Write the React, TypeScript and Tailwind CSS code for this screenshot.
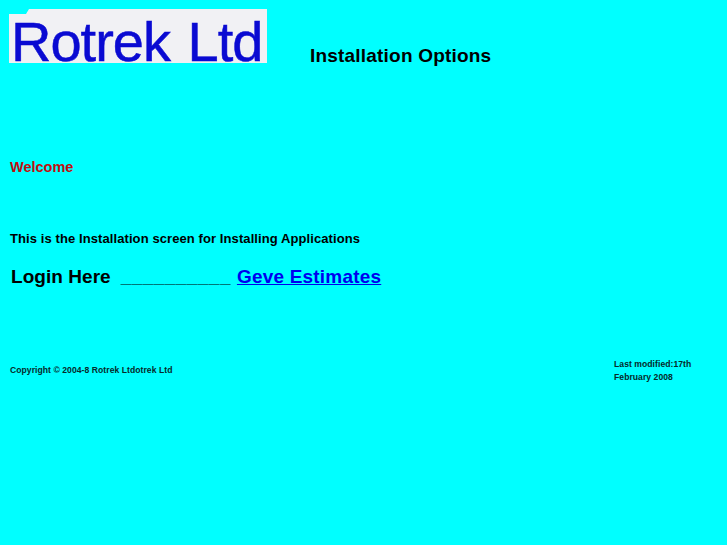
export default function App() {
  return (
    <div className="min-h-[545px] bg-[#00ffff] font-['Liberation_Sans',Arial,sans-serif] font-bold text-black">
      {/* Header */}
      <div className="flex items-start pt-[9px] pl-[9px]">
        <div className="w-[258px] h-[54px] whitespace-nowrap bg-[#f1f1f4] pl-[2px] pt-[12px] text-[56px] leading-[42px] tracking-[-1px] [word-spacing:3px] font-normal text-[#0a0ad2] [clip-path:polygon(0_5px,17px_5px,20px_0,100%_0,100%_100%,0_100%)] [-webkit-text-stroke:0.5px_#0a0ad2]">
          Rotrek Ltd
        </div>
        <h1 className="ml-[43px] mt-[35px] text-[19px] leading-[24px] tracking-[0.2px]">Installation Options</h1>
      </div>

      <p className="mt-[88px] pl-[10px] text-[14.5px] leading-[22px] text-[#c00d0d]">Welcome</p>

      <p className="mt-[51px] pl-[10px] text-[13px] leading-[20px] tracking-[0.09px]">
        This is the Installation screen for Installing Applications
      </p>

      <div className="mt-[15px] flex items-baseline pl-[11px] text-[19px] leading-[26px] tracking-[0.05px]">
        <span>Login Here</span>
        <span className="ml-[10px] tracking-[0.45px]">__________</span>
        <a href="#" className="ml-[6px] text-[#0000ee] underline tracking-[0.2px]">Geve Estimates</a>
      </div>

      {/* Footer */}
      <div className="mt-[68px] flex items-start pl-[10px] text-[8.6px] leading-[13px] tracking-[0.05px] text-[#062a2a]">
        <p className="mt-[6px] w-[604px]">Copyright © 2004-8 Rotrek Ltdotrek Ltd</p>
        <p className="w-[90px]">Last modified:17th<br />February 2008</p>
      </div>
    </div>
  )
}
